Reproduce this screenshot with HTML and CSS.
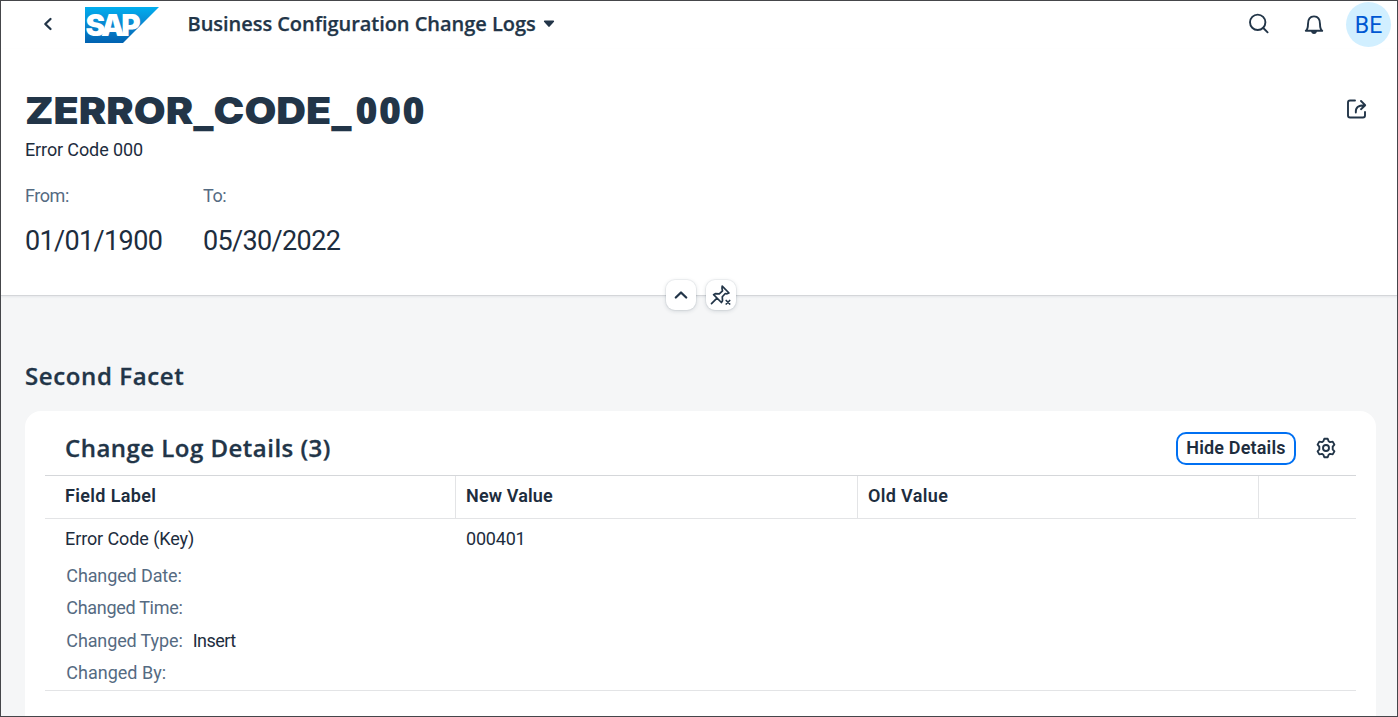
FILE: index.html
```html
<!DOCTYPE html>
<html lang="en">
<head>
<meta charset="utf-8">
<title>Business Configuration Change Logs</title>
<link rel="stylesheet" href="styles.css">
</head>
<body>
<div class="app">
  <header class="shell">
    <svg class="back" width="12" height="16" viewBox="0 0 12 16"><path d="M8.500 3 3.300 8l5.200 5"/></svg>
    <svg class="logo" width="74" height="37" viewBox="0 0 74 37">
      <defs><linearGradient id="sap" x1="0" y1="0" x2="0" y2="1"><stop offset="0" stop-color="#00aeef"/><stop offset=".5" stop-color="#0a86cf"/><stop offset="1" stop-color="#0062b1"/></linearGradient></defs>
      <path fill="url(#sap)" d="M0 0h74L38 36H0z"/>
      <text class="logo-text" x="0.500" y="28.500">SAP</text>
    </svg>
    <span class="shell-title">Business Configuration Change Logs</span>
    <svg class="caret" width="12" height="8" viewBox="0 0 12 8"><path d="M1.500.6h9q.9.200.5 1.100L6.700 6.600q-.7.700-1.400 0L1 1.700Q.6.800 1.500.6z"/></svg>
    <div class="shell-actions">
      <svg class="icon search" width="22" height="22" viewBox="0 0 22 22"><circle cx="9.700" cy="9.300" r="7.700"/><path d="m15.300 15 4.300 4.300"/></svg>
      <svg class="icon bell" width="20" height="22" viewBox="0 0 20 22"><path d="M1.800 16.800C3.900 15.200 4 13 4 10c0-4.700 2-7.600 6-7.600s6 2.900 6 7.600c0 3 .1 5.200 2.200 6.800z"/><path class="solid" d="M7 17h6q-.4 3-3 3t-3-3z"/></svg>
      <span class="avatar">BE</span>
    </div>
  </header>
  <section class="object-header">
    <div class="title-row">
      <h1 class="title"><span class="title-name">ZERROR<span class="low">_</span>CODE<span class="low">_</span></span><span class="title-number">000</span></h1>
      <svg class="icon share" width="22" height="22" viewBox="0 0 22 22"><path d="M9 2.500H4q-2 0-2 2v13q0 2 2 2h13q2 0 2-2V14M9.800 14.500C9.500 9.500 12 7.200 18.500 7.200M15 3l4.200 4.200L15 11.200"/></svg>
    </div>
    <div class="subtitle">Error Code 000</div>
    <div class="facts">
      <div class="fact"><span class="label l-from">From:</span><span class="date">01/01/1900</span></div>
      <div class="fact"><span class="label l-to">To:</span><span class="date">05/30/2022</span></div>
    </div>
    <div class="header-buttons">
      <button class="round-btn"><svg class="icon heavy" width="22" height="22" viewBox="0 0 22 22"><path d="m5.800 13.500 5.200-5 5.200 5"/></svg></button>
      <button class="round-btn"><svg class="icon pin" width="22" height="22" viewBox="0 0 22 22"><path d="m12.200 2.200 6.800 6.800-2 .8-1.700-.3-3 3.300.2 4-1.100 1.700-7.800-7.800 1.700-1.100 4 .2 3.200-3-.5-2.400zM7 14.200 1.500 19.700"/><path d="m16.200 16.500 3.500 3.500m0-3.500-3.500 3.500"/></svg></button>
    </div>
  </section>
  <main class="content">
    <h2 class="section-title">Second Facet</h2>
    <section class="card">
      <div class="toolbar">
        <h3 class="table-title">Change Log Details (3)</h3>
        <button class="hide-btn"><span class="hide-text">Hide Details</span></button>
        <svg class="icon gear" width="22" height="22" viewBox="0 0 22 22"><path d="M9.300 1.800h3.400l.9 2.500 1.400.8 2.700-.5 1.700 3-1.700 2v2.800l1.700 2-1.700 3-2.700-.5-1.400.8-.9 2.500H9.300l-.9-2.500-1.400-.8-2.700.5-1.700-3 1.700-2V9.600l-1.700-2 1.700-3 2.700.5 1.400-.8z"/><circle cx="11" cy="11" r="3"/></svg>
      </div>
      <div class="row head">
        <div class="cell"><span class="th-field">Field Label</span></div>
        <div class="cell"><span class="th-new">New Value</span></div>
        <div class="cell"><span class="th-old">Old Value</span></div>
        <div class="cell"></div>
      </div>
      <div class="record">
        <div class="row">
          <div class="cell"><span class="v-key">Error Code (Key)</span></div>
          <div class="cell"><span class="v-num">000401</span></div>
        </div>
        <div class="popin">
          <div class="pair"><span class="label p-date">Changed Date:</span></div>
          <div class="pair"><span class="label p-time">Changed Time:</span></div>
          <div class="pair"><span class="label p-type">Changed Type:</span><span class="v-insert">Insert</span></div>
          <div class="pair"><span class="label">Changed By:</span></div>
        </div>
      </div>
    </section>
  </main>
</div>
</body>
</html>
```
FILE: styles.css
```css
* { box-sizing: border-box; }
body {
  margin: 0;
  font-family: Roboto, "Liberation Sans", sans-serif;
  font-size: 18px;
  line-height: 22px;
  color: #1d2d3e;
}
h1, h2, h3 { margin: 0; }
button { padding: 0; background: #fff; font: inherit; color: inherit; }
svg { display: block; flex: none; }
.app {
  height: 717px;
  border: 1px solid #45464a;
  background: #f5f6f7;
  overflow: hidden;
  display: flex;
  flex-direction: column;
  white-space: nowrap;
}
.icon { fill: none; stroke: #223548; stroke-width: 1.9; stroke-linejoin: round; stroke-linecap: round; }
.heavy { stroke-width: 2.300; }
.pin { stroke-width: 1.7; }
.icon .solid { fill: #223548; stroke: none; }

.shell { height: 48px; flex: none; background: #fff; display: flex; align-items: center; padding: 0 6px 2px 41px; }
.back { fill: none; stroke: #223548; stroke-width: 2.300; stroke-linecap: round; stroke-linejoin: round; }
.logo { margin-left: 31px; margin-top: 3px; }
.logo-text { font-family: Inter, sans-serif; font-weight: 900; font-size: 29.500px; letter-spacing: -3.200px; fill: #fff; }
.shell-title { margin-left: 28.500px; font-family: "Open Sans", sans-serif; font-weight: 650; font-size: 20px; letter-spacing: -.04px; color: #223548; -webkit-text-stroke: .25px #223548; }
.caret { margin-left: 7px; fill: #223548; }
.shell-actions { margin-left: auto; display: flex; align-items: center; }
.bell { margin-left: 34px; margin-top: 2px; }
.avatar {
  width: 45px; height: 45px; margin-left: 22px; border-radius: 50%;
  background: #d1efff; color: #0057d2; font-size: 23px; line-height: 47px; text-align: center;
}

.object-header { position: relative; height: 247px; flex: none; background: #fff; border-bottom: 1px solid #d4d6d9; padding: 38px 29px 0 24px; box-shadow: 0 1px 2px rgba(34, 53, 72, .08); }
.title-row { height: 48px; display: flex; align-items: center; justify-content: space-between; }
.title { display: flex; font-family: Inter, sans-serif; font-weight: 900; font-size: 37px; line-height: 48px; color: #223548; }
.title-name { width: 330.500px; transform: scaleX(1.113); transform-origin: left; }
.low { display: inline-block; transform: translateY(2px); }
.title-number { font-family: "Open Sans", sans-serif; font-weight: 800; font-size: 37.500px; line-height: 46px; letter-spacing: 1.500px; }
.share { margin-bottom: 4px; }
.subtitle { margin-top: 4px; letter-spacing: -.12px; }
.facts { display: flex; gap: 41px; margin-top: 24px; }
.fact { display: flex; flex-direction: column; gap: 18px; width: 137px; }
.label { color: #556b82; }
.l-from, .l-to { letter-spacing: -.45px; }
.date { font-size: 27px; line-height: 32px; letter-spacing: -.65px; }
.header-buttons { position: absolute; left: 665px; bottom: -15px; display: flex; gap: 10px; }
.round-btn {
  width: 30px; height: 30px; border: 0; border-radius: 9px; display: grid; place-items: center;
  box-shadow: 0 0 0 1px rgba(34, 53, 72, .05), 0 1px 4px rgba(34, 53, 72, .18);
}

.content { padding: 0 21px 0 24px; flex: 1; display: flex; flex-direction: column; }
.section-title, .table-title { font-family: "Open Sans", sans-serif; font-weight: 650; font-size: 24px; line-height: 34px; color: #223548; -webkit-text-stroke: .3px #223548; }
.section-title { margin-top: 63px; letter-spacing: .62px; }
.card { margin-top: 18px; flex: 1; background: #fff; border-radius: 16px 16px 0 0; padding: 0 20px; }
.toolbar { height: 65px; display: flex; align-items: center; padding: 10px 19px 0 20px; border-bottom: 1px solid #d5d7da; }
.table-title { margin-right: auto; letter-spacing: .48px; }
.hide-btn { width: 120px; height: 33px; border: 2px solid #0070f2; border-radius: 10px; font-weight: 600; letter-spacing: .17px; }
.gear { margin-left: 19px; }
.row { display: grid; grid-template-columns: 411px 402px 401px 1fr; }
.head { height: 43px; border-bottom: 1px solid #e3e4e6; font-weight: 600; line-height: 40px; }
.head .cell { border-right: 1px solid #e3e4e6; }
.cell { padding-left: 10px; }
.row .cell:first-child { padding-left: 20px; }
.head .cell:last-child { border-right: 0; }
.th-field, .th-old { letter-spacing: .35px; }
.th-new { letter-spacing: .15px; }
.record { height: 172px; border-bottom: 1px solid #e3e4e6; }
.record .row { height: 41px; line-height: 40px; }
.v-key { letter-spacing: -.1px; }
.v-num { letter-spacing: -.2px; }
.popin { padding-left: 21.300px; }
.pair { height: 32.300px; line-height: 32px; display: flex; gap: 10px; }
.p-date, .p-type { letter-spacing: -.12px; }
.p-time { letter-spacing: -.3px; }
.v-insert { letter-spacing: -.5px; }
```
